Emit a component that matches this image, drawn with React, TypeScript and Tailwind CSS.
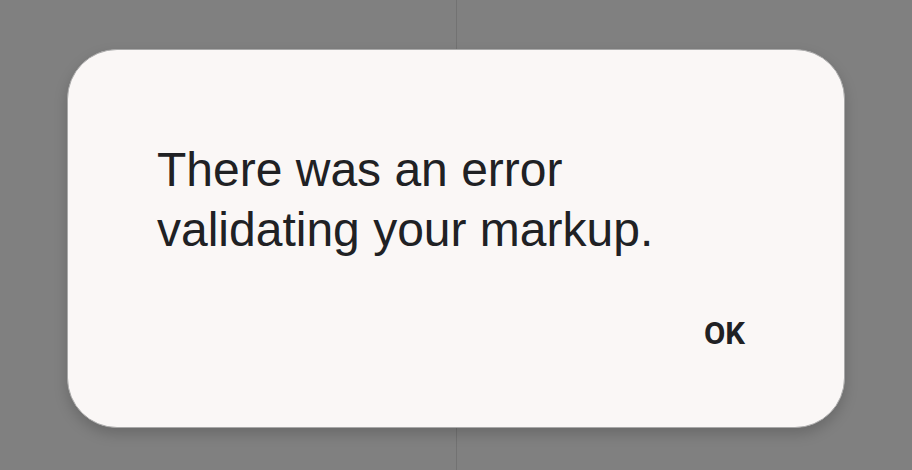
export default function App() {
  return (
    <div className="relative flex h-[470px] w-full justify-center overflow-hidden bg-[#808080]">
      <div className="absolute left-[456px] top-0 h-full w-px bg-[#727272]" />
      <div
        className="relative mt-[49px] flex h-[379px] w-[778px] flex-col rounded-[50px] border border-[#a9a9a9] bg-[#faf7f6] pl-[89px] pr-[99px] pt-[90px] shadow-[0_6px_14px_rgba(0,0,0,0.18)]"
        style={{ fontFamily: '"Liberation Sans", Arial, sans-serif' }}
      >
        <p className="text-[48px] leading-[60px] text-[#202124]">
          There was an error
          <br />
          validating your markup.
        </p>
        <div className="mt-[56px] flex justify-end">
          <button
            className="text-[31px] font-bold leading-[36px] text-[#202124]"
            style={{ fontFamily: 'Roboto, "Liberation Sans", sans-serif' }}
          >
            OK
          </button>
        </div>
      </div>
    </div>
  );
}
